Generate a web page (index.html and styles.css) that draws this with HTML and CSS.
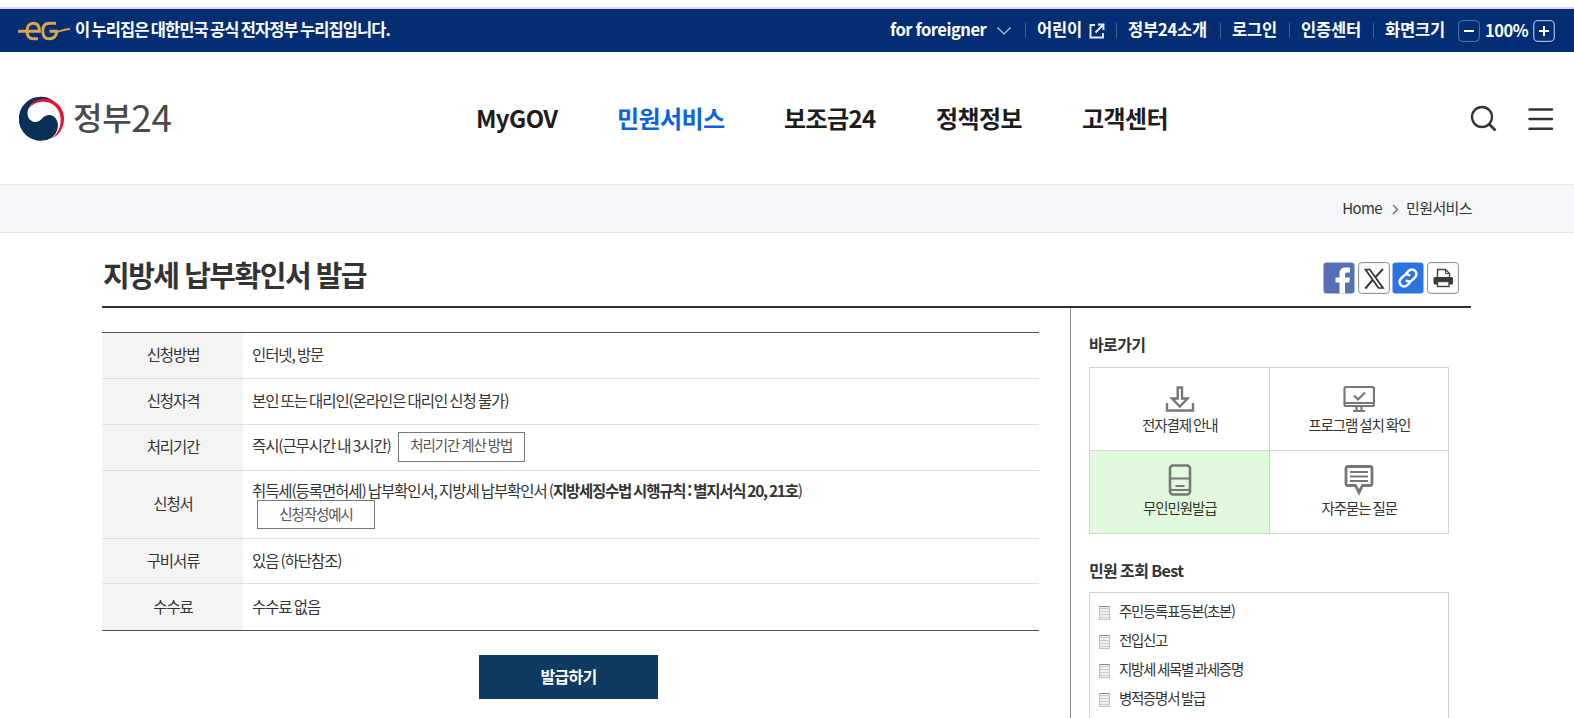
FILE: index.html
```html
<!DOCTYPE html>
<html lang="ko">
<head>
<meta charset="utf-8">
<title>지방세 납부확인서 발급 | 정부24</title>
<link rel="stylesheet" href="styles.css">
</head>
<body>
<div class="topbar">
  <div class="official">
    <svg class="eg" width="52" height="20" viewBox="0 0 52 20" fill="none" stroke="#dca54c" stroke-width="2.9">
      <path d="M0 10.200H21.500C21.500 5 19 2.200 15.200 2.200C11.500 2.200 9 5 9 10C9 15 11.500 17.800 15.500 17.800H20"/>
      <path d="M38 2.200H31.500C27 2.200 24.800 5 24.800 10C24.800 15 27 17.800 31 17.800C36 17.800 38.500 15.500 38.800 10.200H31.500"/>
      <path d="M38.500 10.700C43 10.500 45 8.300 52 8.100" stroke-width="2"/>
    </svg>
    <span>이 누리집은 대한민국 공식 전자정부 누리집입니다.</span>
  </div>
  <div class="util">
    <a class="u-foreign">for foreigner</a>
    <svg class="u-chev" width="16" height="10" viewBox="0 0 16 10" fill="none" stroke="#b9c8e2" stroke-width="1.2"><path d="M1.500 1.500L8 8l6.500-6.500"/></svg>
    <i class="sep"></i>
    <a class="u-kids">어린이</a>
    <svg class="u-ext" width="16" height="16" viewBox="0 0 16 16" fill="none" stroke="#e8eef8" stroke-width="1.900"><path d="M6 2H1.500v12.500H14V10M9 1.500h5.500V7M14 2L6.500 9.500"/></svg>
    <i class="sep"></i>
    <a class="u-about">정부24소개</a>
    <i class="sep"></i>
    <a class="u-login">로그인</a>
    <i class="sep"></i>
    <a class="u-cert">인증센터</a>
    <i class="sep"></i>
    <a class="u-size">화면크기</a>
    <svg class="u-minus" width="22" height="22" viewBox="0 0 22 22" fill="none"><rect x=".6" y=".6" width="20.800" height="20.800" rx="4" stroke="#5a78ab"/><path d="M6 11h10" stroke="#fff" stroke-width="2"/></svg>
    <span class="u-pct">100%</span>
    <svg width="22" height="22" viewBox="0 0 22 22" fill="none"><rect x=".7" y=".7" width="20.600" height="20.600" rx="4" stroke="#a5b5d3" stroke-width="1.300"/><path d="M6 11h10M11 6v10" stroke="#fff" stroke-width="2"/></svg>
  </div>
</div>

<header class="header">
  <a class="logo">
    <svg width="46" height="46" viewBox="0 0 46 46">
      <path d="M36 7A22 22 0 1 0 32.500 43C37.500 39 40 33 38.500 27C36.500 19.500 28.500 18 24 22.500C20.500 26.500 17 28 13.500 26.500C8.500 24.500 7 18 10 12.500C14.500 5 27 1.500 36 7Z" fill="#0b2f55"/>
      <path d="M9.500 13.500C13 6.500 22 1.600 31 4.600C40 7.500 45.500 16 45 25C44.500 34 39 41 33 43.500C40 37.500 42.500 29.500 41.500 22C40 11.500 31.500 5.800 22.500 6.800C17 7.400 12.500 9.800 9.500 13.500Z" fill="#e8112d"/>
      <path d="M8.500 15.500A22 22 0 0 1 36 6.300A22 22 0 0 0 8.500 15.500Z" fill="#0b2f55"/>
    </svg>
    <span class="logo-ko">정부</span><span class="logo-num">24</span>
  </a>
  <nav class="gnb">
    <a class="g1">MyGOV</a>
    <a class="g2 on">민원서비스</a>
    <a class="g3">보조금24</a>
    <a class="g4">정책정보</a>
    <a class="g5">고객센터</a>
  </nav>
  <div class="tools">
    <svg width="28" height="28" viewBox="0 0 28 28" fill="none" stroke="#333" stroke-width="2.300"><circle cx="12" cy="12" r="10"/><path d="M19 19l6.500 6.500" stroke-width="2.700"/></svg>
    <svg width="26" height="26" viewBox="0 0 26 26" stroke="#333" stroke-width="2.400" stroke-linecap="round"><path d="M1.500 3.500h22.500M1.500 13h22.500M1.500 22.700h22.500"/></svg>
  </div>
</header>

<div class="crumbs">
  <span class="home">Home</span>
  <svg width="7" height="11" viewBox="0 0 7 11" fill="none" stroke="#777" stroke-width="1.500"><path d="M1 1l4.500 4.500L1 10"/></svg>
  <span class="here">민원서비스</span>
</div>

<div class="container">
  <div class="titlebar">
    <h1>지방세 납부확인서 발급</h1>
    <div class="share">
      <svg width="32" height="32" viewBox="0 0 32 32"><rect x=".5" y=".5" width="31" height="31" rx="3" fill="#5571b3"/><path d="M16.500 31.500V20.500h-4V15.500h4V12c0-4.600 2.400-6.500 6-6.500H27V10.500h-2.500c-2 0-2.500.8-2.500 2.200v2.800h5l-.8 5H22v11z" fill="#fff"/></svg>
      <svg width="32" height="32" viewBox="0 0 32 32" fill="none" stroke="#333"><rect x=".6" y=".6" width="30.800" height="30.800" rx="3" fill="#fff" stroke="#888"/><path d="M7.500 7.500h4.300l13.200 18.500h-4.500z" stroke-width="1.700"/><path d="M25 7L17.500 15.200M14.500 18.200L7.300 26.500" stroke-width="2"/></svg>
      <svg width="32" height="32" viewBox="0 0 32 32" fill="none" stroke="#fff" stroke-width="2.500"><rect x=".5" y=".5" width="31" height="31" rx="3" fill="#2b73e0" stroke="none"/><g transform="rotate(-45 16 16)"><path d="M15 20.500h-4.500a4.500 4.500 0 0 1 0-9h4a4.500 4.500 0 0 1 4.500 4.500"/><path d="M17 11.500h4.500a4.500 4.500 0 0 1 0 9h-4a4.500 4.500 0 0 1-4.500-4.500"/></g></svg>
      <svg width="32" height="32" viewBox="0 0 32 32" fill="none"><rect x=".6" y=".6" width="30.800" height="30.800" rx="3" fill="#fff" stroke="#888"/><path d="M10.500 16V7.500h8l4 4V16" stroke="#444" stroke-width="1.400"/><path d="M18.500 7.500v4h4" stroke="#444"/><rect x="6.500" y="15" width="19.500" height="7.500" rx="1.500" fill="#383838"/><rect x="10.500" y="19.500" width="11.500" height="5" fill="#fff" stroke="#444" stroke-width="1.400"/></svg>
    </div>
  </div>

  <div class="columns">
    <main class="main">
      <dl class="info">
        <div class="row r1"><dt>신청방법</dt><dd>인터넷, 방문</dd></div>
        <div class="row r2"><dt>신청자격</dt><dd>본인 또는 대리인(온라인은 대리인 신청 불가)</dd></div>
        <div class="row r3"><dt>처리기간</dt><dd class="inline"><span class="period">즉시(근무시간 내 3시간)</span><a class="btn calc">처리기간 계산 방법</a></dd></div>
        <div class="row r4"><dt>신청서</dt><dd class="form"><span class="formtext">취득세(등록면허세) 납부확인서, 지방세 납부확인서 (<b>지방세징수법 시행규칙 : 별지서식 20, 21호</b>)</span><a class="btn sample">신청작성예시</a></dd></div>
        <div class="row r5"><dt>구비서류</dt><dd>있음 (하단참조)</dd></div>
        <div class="row r6"><dt>수수료</dt><dd>수수료 없음</dd></div>
      </dl>
      <a class="issue">발급하기</a>
    </main>

    <aside class="side">
      <h2>바로가기</h2>
      <div class="quick">
        <a><svg width="30" height="28" viewBox="0 0 30 28" fill="none" stroke="#777" stroke-width="2.400"><path d="M12.700 2.500h4.300v11h5.500L14.800 21.500 7 13.500h5.700z"/><path d="M2 18v7.500h26V18"/></svg><span>전자결제 안내</span></a>
        <a><svg width="32" height="28" viewBox="0 0 32 28" fill="none" stroke="#777" stroke-width="2.200"><rect x="1.500" y="2" width="29.500" height="19" rx="1.500"/><path d="M1.500 18h29.500M13.500 21v4M18.500 21v4M10 26h12"/><path d="M11 10.500l4 4 7-7"/></svg><span>프로그램 설치 확인</span></a>
        <a class="green"><svg width="24" height="32" viewBox="0 0 24 32" fill="none" stroke="#777" stroke-width="2.600"><rect x="2" y="1.500" width="20" height="29" rx="3"/><path d="M2 14.500h20M7.500 22h9M2 26h20" stroke-width="2"/></svg><span>무인민원발급</span></a>
        <a><svg width="30" height="32" viewBox="0 0 30 32" fill="none" stroke="#777" stroke-width="2.800"><path d="M4 2.500h22a2 2 0 0 1 2 2v15a2 2 0 0 1-2 2h-7.500L15 28.500l-3.500-7H4a2 2 0 0 1-2-2v-15a2 2 0 0 1 2-2z"/><path d="M6 8h18M6 12.500h18M6 17h18" stroke-width="2.200"/></svg><span>자주묻는 질문</span></a>
      </div>
      <h2 class="best-title">민원 조회 Best</h2>
      <ul class="best">
        <li>주민등록표등본(초본)</li>
        <li>전입신고</li>
        <li>지방세 세목별 과세증명</li>
        <li>병적증명서 발급</li>
      </ul>
    </aside>
  </div>
</div>
</body>
</html>
```

FILE: styles.css
```css
* { box-sizing: border-box; }
html, body { margin: 0; height: 718px; overflow: hidden; }
body {
  background: #fff;
  color: #333;
  font-family: "Noto Sans CJK KR", "Noto Sans", sans-serif;
  font-size: 15.5px;
  letter-spacing: -1.1px;
  word-spacing: -1px;
  line-height: 1.4;
}
svg { display: block; flex: none; }
a { color: inherit; white-space: nowrap; }
h1, h2, dl, dd, ul { margin: 0; padding: 0; }

.topbar {
  height: 52px;
  padding: 0 19px 0 18px;
  border-top: 7px solid #fff;
  box-shadow: inset 0 2px #d6deec;
  background: #032e74;
  display: flex;
  justify-content: space-between;
  align-items: center;
  color: #fff;
  font-size: 16.5px;
  font-weight: 700;
  letter-spacing: -0.2px;
  word-spacing: -1.5px;
}
.official { display: flex; align-items: center; gap: 5px; padding-top: 2px; }
.official span { white-space: nowrap; letter-spacing: -0.92px; padding-bottom: 2px; }
.util { display: flex; align-items: center; padding-top: 2px; }
.util a, .u-pct { display: block; padding-bottom: 2px; }
.sep { width: 1px; height: 15px; background: #3d609a; }
.util .u-foreign { width: 106px; letter-spacing: -0.500px; word-spacing: -0.500px; }
.u-chev { margin-right: 13px; }
.u-kids { width: 63px; padding-left: 11px; }
.u-ext { margin-right: 11px; }
.u-about { width: 103px; padding-left: 11px; }
.u-login { width: 68px; padding-left: 11px; }
.u-cert { width: 83px; padding-left: 11px; }
.u-size { width: 84px; padding-left: 11px; }
.u-minus { margin-right: 5px; }
.util .u-pct { width: 48px; padding-bottom: 0; letter-spacing: -0.500px; }

.header {
  height: 132px;
  padding: 0 20px 0 19px;
  display: flex;
  align-items: center;
}
.logo { display: flex; align-items: center; width: 457px; color: #4a4a4a; }
.logo-ko { margin-left: 8px; font-size: 32px; font-weight: 500; letter-spacing: -0.300px; padding-bottom: 3px; }
.logo-num { font-size: 37px; font-weight: 400; letter-spacing: -0.300px; padding-bottom: 3px; }
.gnb { display: flex; flex: 1; font-size: 24px; font-weight: 700; letter-spacing: -0.600px; color: #1d1d1d; padding-bottom: 1px; }
.g1 { width: 141px; }
.g2 { width: 167px; }
.g3 { width: 152px; }
.g4 { width: 146px; }
.on { color: #0b63dc; }
.tools { display: flex; align-items: center; gap: 30px; padding-top: 1px; }

.crumbs {
  height: 49px;
  background: #f5f6f9;
  border-top: 1px solid #e4e6ea;
  border-bottom: 1px solid #e4e6ea;
  padding-right: 102px;
  display: flex;
  justify-content: flex-end;
  align-items: center;
  font-size: 15px;
  letter-spacing: -0.600px;
}
.crumbs svg { margin: 2px 7px 0 10px; }
.crumbs span { padding-bottom: 2px; }

.container { width: 1369px; margin-left: 102px; }
.titlebar {
  height: 75px;
  border-bottom: 2px solid #333;
  display: flex;
  justify-content: space-between;
  align-items: flex-start;
  padding: 20px 12px 0 1px;
}
h1 { font-size: 29px; line-height: 42px; font-weight: 700; letter-spacing: -1.500px; }
.share { display: flex; gap: 2.700px; padding-top: 9px; }

.columns { display: flex; height: 410px; }
.main { width: 968px; padding: 24px 31px 0 0; }
.info { border-top: 1px solid #555; border-bottom: 1px solid #555; }
.row { display: flex; border-bottom: 1px solid #ddd; }
.row:last-child { border-bottom: 0; }
.row dt { width: 141px; background: #f4f4f4; display: flex; align-items: center; justify-content: center; padding: 0 0 1px 1px; }
.row dd { flex: 1; padding-left: 9px; padding-bottom: 1px; display: flex; align-items: center; }
.r1 { height: 46px; }
.r2 { height: 46px; }
.r3 { height: 46px; }
.r4 { height: 68px; }
.r5 { height: 45px; }
.r6 { height: 46px; }
.btn {
  display: flex;
  align-items: center;
  justify-content: center;
  border: 1px solid #777;
  font-size: 14.5px;
  padding-bottom: 2px;
  color: #555;
  background: #fff;
}
.row .inline { padding-bottom: 2px; }
.period { padding-bottom: 1px; }
.calc { width: 127px; height: 30px; margin-left: 7px; }
.row .form { flex-direction: column; align-items: flex-start; justify-content: flex-start; padding-top: 9px; }
.formtext { line-height: 20px; white-space: nowrap; }
.form b { font-weight: 700; letter-spacing: -1.250px; }
.sample { width: 118px; height: 29px; margin-left: 5px; padding-bottom: 1px; }
.issue {
  display: flex;
  align-items: center;
  justify-content: center;
  width: 179px;
  height: 44px;
  margin: 24px 0 0 377px;
  padding-bottom: 1px;
  background: #0f3b63;
  color: #fff;
  font-size: 16px;
  font-weight: 700;
  letter-spacing: -0.700px;
}

.side { flex: 1; display: flex; flex-direction: column; border-left: 1px solid #8a8a8a; padding: 25px 22px 0 18px; }
h2 { font-size: 16px; line-height: 22px; font-weight: 700; letter-spacing: -0.600px; }
.quick {
  flex: none;
  margin-top: 12px;
  height: 167px;
  display: grid;
  grid-template-columns: 1fr 1fr;
  grid-template-rows: 1fr 1fr;
  gap: 1px;
  padding: 1px;
  background: #d4d4d4;
}
.quick a {
  background: #fff;
  display: flex;
  flex-direction: column;
  align-items: center;
  justify-content: flex-end;
  padding: 0 0 15px 1px;
  font-size: 14.5px;
  line-height: 20px;
}
.quick a svg { margin-bottom: 2px; }
.quick .green { background: #e1fade; }
.best-title { margin-top: 25px; }
.best {
  flex: 1;
  min-height: 0;
  margin-top: 11px;
  border: 1px solid #d0d0d0;
  border-bottom: 0;
  padding: 4px 0 0 9px;
  list-style: none;
}
.best li { height: 29px; display: flex; align-items: center; font-size: 14.5px; letter-spacing: -1.300px; }
.best li::before {
  content: "";
  width: 9px;
  height: 12px;
  margin: 3px 9px 0 0;
  border: 1px solid #b9c0c6;
  border-top-color: #888;
  background: repeating-linear-gradient(#eef1f3 0 1px, #c9ced2 1px 2px, #eef1f3 2px 3px);
}
.best li { padding-bottom: 1px; }
```
